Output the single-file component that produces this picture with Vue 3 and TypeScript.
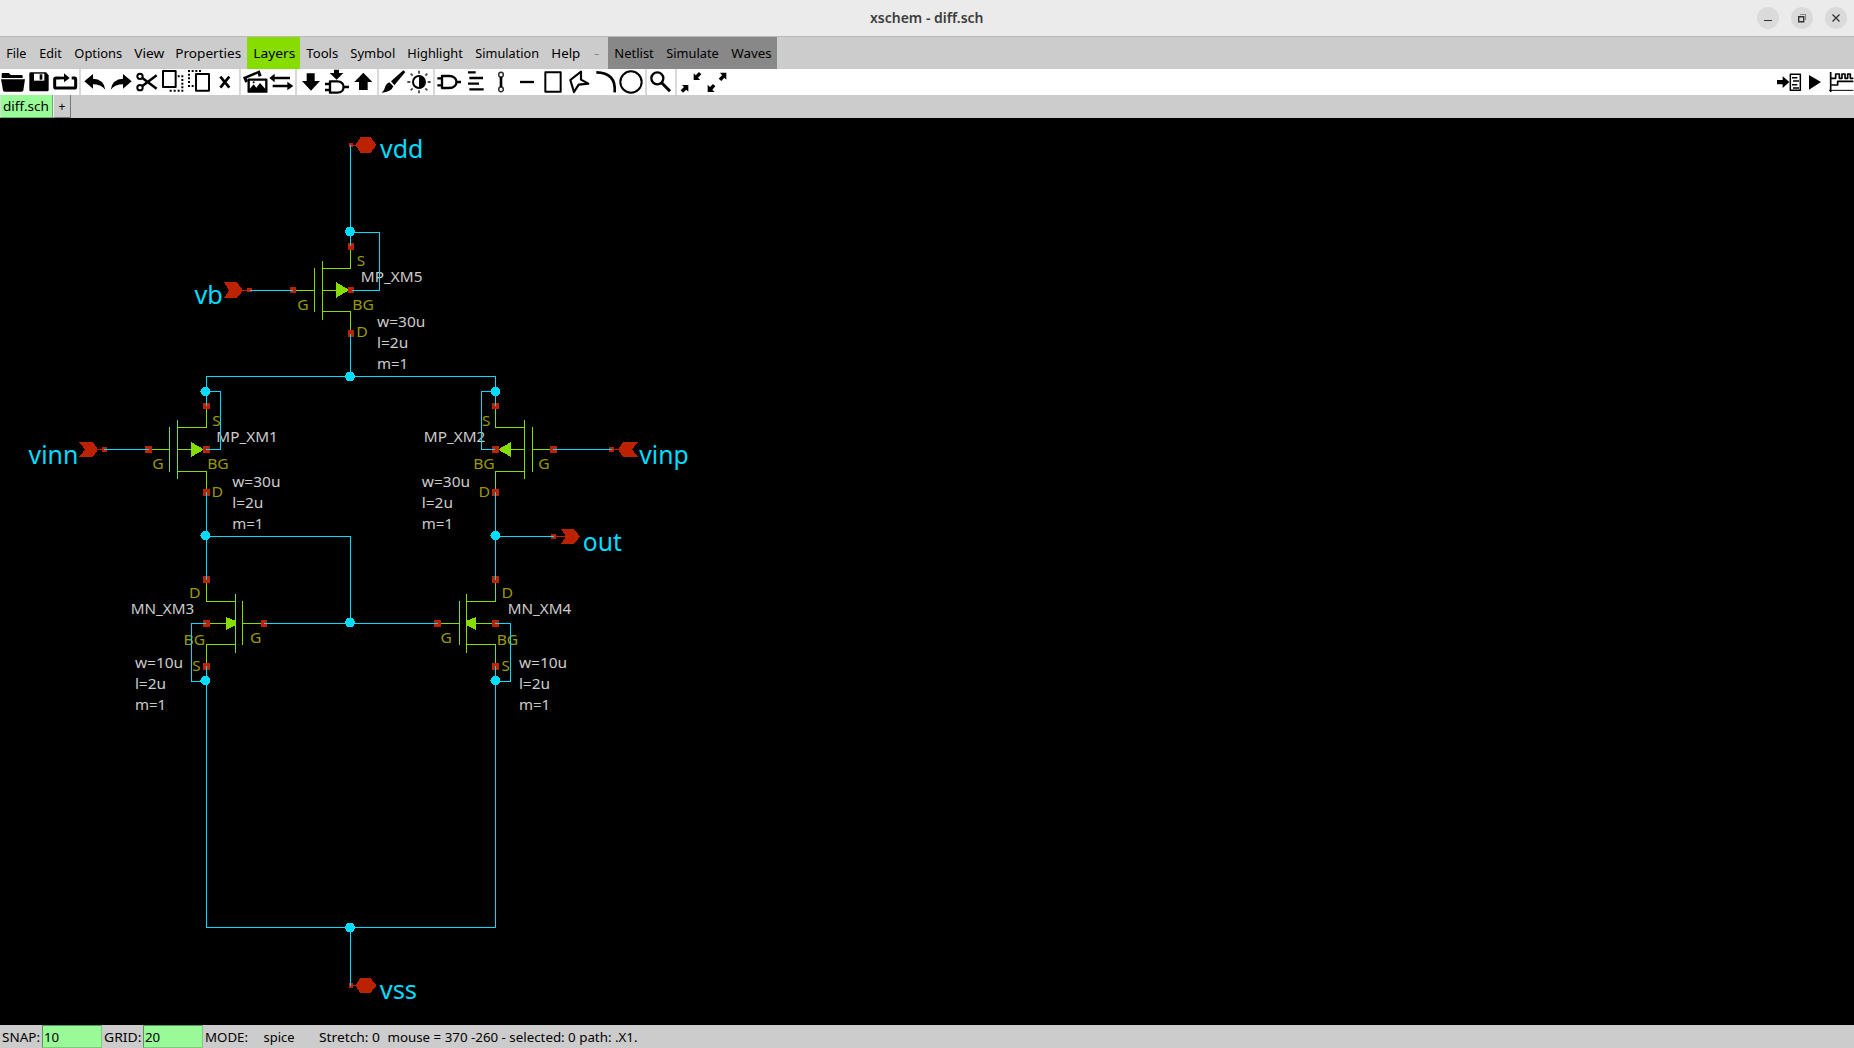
<script setup lang="ts">
interface MenuItem { label: string; start: number; end: number; text: number; kind?: string }
interface Label { t: string; x: number; y: number; w: number; c: string }

const menu: MenuItem[] = [
  { label: 'File', start: 0, end: 33, text: 20 },
  { label: 'Edit', start: 33, end: 68, text: 22.5 },
  { label: 'Options', start: 68, end: 128, text: 48 },
  { label: 'View', start: 128, end: 169, text: 30 },
  { label: 'Properties', start: 169, end: 247, text: 66 },
  { label: 'Layers', start: 247, end: 300, text: 42, kind: 'green' },
  { label: 'Tools', start: 300, end: 344, text: 32 },
  { label: 'Symbol', start: 344, end: 401, text: 45 },
  { label: 'Highlight', start: 401, end: 469, text: 55.5 },
  { label: 'Simulation', start: 469, end: 545, text: 63.7 },
  { label: 'Help', start: 545, end: 588, text: 29 },
  { label: '-', start: 588, end: 608, text: 5, kind: 'dim' },
  { label: 'Netlist', start: 608, end: 660, text: 39.5, kind: 'dark' },
  { label: 'Simulate', start: 660, end: 725, text: 52.5, kind: 'dark' },
  { label: 'Waves', start: 725, end: 777, text: 40.5, kind: 'dark' },
]

const wires: string[] = [
  'M350.5 145V246', 'M350 232.5H379.5V290.5H352', 'M250 290.5H293',
  'M350.5 334V376.5', 'M206.5 406V376.5H495.5V406',
  'M206 391.5H220.5V449.5H206', 'M495 391.5H481.5V449.5H495',
  'M104 449.5H149', 'M553 449.5H612',
  'M206.5 492V580', 'M495.5 492V580',
  'M206 536.5H350.5V623', 'M495 536.5H554',
  'M264 623.5H438',
  'M206 623.5H191.5V681.5H206', 'M495 623.5H510.5V681.5H495',
  'M206.5 666V927.5H495.5V666', 'M350.5 927V986',
]
const devices: string[] = [
  'M350.5 249V268.5H322M322.5 261V320M314.5 268V312M322 311.5H350.5V331M296 290.5H314M323 290.5H337',
  'M206.5 409V427.5H177M177.5 420V479M169.5 427V472M177 471.5H206.5V490M152 449.5H169M178 449.5H192',
  'M495.5 409V427.5H525M524.5 420V479M532.5 427V472M525 471.5H495.5V490M550 449.5H533M524 449.5H510',
  'M206.5 583V601.5H236M235.5 594V653M242.5 601V645M236 644.5H206.5V664M261 623.5H243M209 623.5H227',
  'M495.5 583V601.5H466M466.5 594V653M459.5 601V645M466 644.5H495.5V664M441 623.5H459M476 623.5H493',
]
const arrows: string[] = [
  '336,282 336,298 349,290', '191,442 191,457 204,449.5', '511,442 511,457 498,449.5',
  '226,617 226,630 236,625 236,621', '476,617 476,630 466,625 466,621',
]
const pins: number[][] = [
  [348, 243, 6, 7], [348, 287, 6, 6], [348, 330, 6, 7], [290, 287, 6, 6],
  [203, 403, 7, 6], [203, 446, 7, 7], [203, 489, 7, 7], [145, 446, 7, 7],
  [492, 403, 7, 6], [492, 446, 7, 7], [492, 489, 7, 7], [550, 446, 7, 7],
  [203, 576, 7, 7], [203, 620, 7, 7], [203, 663, 7, 7], [261, 620, 6, 7],
  [492, 576, 7, 7], [492, 620, 7, 7], [492, 663, 7, 7], [434, 620, 7, 7],
  [349, 143, 4, 4], [349, 983, 4, 5], [247, 288, 5, 4], [102, 447, 5, 5],
  [609, 447, 5, 5], [551, 534, 5, 5],
]
const ports: string[] = [
  '355.5,145 360.5,137 370.500,137 376.5,145 370.500,153 360.5,153',
  '355.5,985.5 360.5,978 370.500,978 376.5,985.5 370.500,993 360.5,993',
  '224,282 237,282 243,290.5 237,298 224,298 229,290.5',
  '79,442 93,442 98,449.5 93,457 79,457 85,449.5',
  '638,442 623,442 618,449.5 623,457 638,457 632,449.5',
  '561,529 574,529 580,536.5 574,544 561,544 566,536.5',
]
const stubs = 'M353 145.5H356M353 985.5H356M242 290.5H247M97 449.5H102M614 449.5H619M556 536.5H566'
const dots: number[][] = [
  [350, 231.5], [350, 376.5], [205.3, 391.5], [495.3, 391.5], [205.3, 535.5], [495.3, 535.5],
  [350, 622.5], [205.3, 680.5], [495.3, 680.5], [350, 927.5],
]

const params = (x: number, y: number, w: string): Label[] => [
  { t: `w=${w}`, x, y, w: 48.3, c: 'val' },
  { t: 'l=2u', x, y: y + 21, w: 31.2, c: 'val' },
  { t: 'm=1', x, y: y + 42, w: 31.2, c: 'val' },
]
const labels: Label[] = [
  { t: 'vdd', x: 380, y: 158, w: 43.4, c: 'net' },
  { t: 'vb', x: 194.5, y: 304, w: 28.4, c: 'net' },
  { t: 'vinn', x: 28.5, y: 464, w: 49.8, c: 'net' },
  { t: 'vinp', x: 639.3, y: 464, w: 49.4, c: 'net' },
  { t: 'out', x: 582.8, y: 551, w: 39.2, c: 'net' },
  { t: 'vss', x: 379.7, y: 999, w: 37.4, c: 'net' },
  { t: 'MP_XM5', x: 360.8, y: 282, w: 61.7, c: 'val' },
  { t: 'MP_XM1', x: 216.3, y: 442, w: 61.5, c: 'val' },
  { t: 'MP_XM2', x: 423.8, y: 442, w: 61.5, c: 'val' },
  { t: 'MN_XM3', x: 130.7, y: 614, w: 63.5, c: 'val' },
  { t: 'MN_XM4', x: 507.7, y: 614, w: 63.5, c: 'val' },
  ...params(377, 327, '30u'), ...params(232.2, 487, '30u'), ...params(421.8, 487, '30u'),
  ...params(134.9, 668, '10u'), ...params(518.9, 668, '10u'),
  { t: 'S', x: 356.7, y: 266, w: 8.4, c: 'pin' },
  { t: 'G', x: 297.3, y: 310, w: 11.4, c: 'pin' },
  { t: 'BG', x: 352.3, y: 310, w: 21.6, c: 'pin' },
  { t: 'D', x: 356.3, y: 337, w: 11.6, c: 'pin' },
  { t: 'S', x: 212.2, y: 426, w: 8.4, c: 'pin' },
  { t: 'G', x: 152.2, y: 469, w: 11.4, c: 'pin' },
  { t: 'BG', x: 207.2, y: 469, w: 21.6, c: 'pin' },
  { t: 'D', x: 211.6, y: 497, w: 11.6, c: 'pin' },
  { t: 'S', x: 482, y: 426, w: 8.4, c: 'pin' },
  { t: 'G', x: 538.2, y: 469, w: 11.4, c: 'pin' },
  { t: 'BG', x: 473.2, y: 469, w: 21.6, c: 'pin' },
  { t: 'D', x: 478.6, y: 497, w: 11.6, c: 'pin' },
  { t: 'D', x: 189, y: 598, w: 11.6, c: 'pin' },
  { t: 'BG', x: 183.5, y: 645, w: 21.6, c: 'pin' },
  { t: 'S', x: 192.2, y: 671, w: 8.4, c: 'pin' },
  { t: 'G', x: 250, y: 643, w: 11.4, c: 'pin' },
  { t: 'D', x: 501.4, y: 598, w: 11.6, c: 'pin' },
  { t: 'BG', x: 496.7, y: 645, w: 21.6, c: 'pin' },
  { t: 'S', x: 501.6, y: 671, w: 8.4, c: 'pin' },
  { t: 'G', x: 440.6, y: 643, w: 11.4, c: 'pin' },
]
</script>

<template>
  <div class="app">
    <header class="title">
      <svg class="caption" width="120" height="36"><text x="3" y="23" textLength="113.5" lengthAdjust="spacingAndGlyphs">xschem - diff.sch</text></svg>
      <div class="controls">
        <span class="ctl"><svg width="22" height="22"><path d="M7 13.5h8" /></svg></span>
        <span class="ctl"><svg width="22" height="22"><path d="M7.7 9.7h5v5h-5z" stroke-width="1.4" /><path d="M9 7.5h5.5v5.500" opacity=".5" stroke-width="1.1" /></svg></span>
        <span class="ctl"><svg width="22" height="22"><path d="M7.500 7.500l7 7M14.500 7.500l-7 7" stroke-width="1.3" /></svg></span>
      </div>
    </header>

    <nav class="menu">
      <svg v-for="m in menu" :key="m.label" :class="['item', m.kind]" :width="m.end - m.start" height="32">
        <text x="6.3" y="21" :textLength="m.text" lengthAdjust="spacingAndGlyphs">{{ m.label }}</text>
      </svg>
    </nav>

    <div class="tools">
      <svg class="group" width="79" height="26" viewBox="0 117 237 78">
        <path d="M5 144V132q0-3 3-3h18l7 6h31q4 0 4 4v5z" />
        <path d="M3 148H75L70 181q-1 4-5 4H14q-4 0-5-4z" />
        <path d="M92 127H138L146 136V180q0 4-4 4H92q-4 0-4-4V131q0-4 4-4z" />
        <path d="M102 131H133V152H102z" fill="#fff" /><path d="M119 133h8v16h-8z" />
        <path class="s" stroke-width="9" d="M180 144H168q-4 0-4 4V170q0 4 4 4H223q4 0 4-4V148q0-4-4-4H215" />
        <path class="s" stroke-width="8" d="M180 144H197" /><path d="M192 130L209 144L192 157z" />
      </svg>
      <svg class="group" width="158" height="26" viewBox="243 117 474 78">
        <path d="M253 154L279 132V146Q311 147 316 179Q302 163 279 163V176z" />
        <path d="M395 154L369 132V146Q337 147 332 179Q346 163 369 163V176z" />
        <g class="s" stroke-width="6"><circle cx="420" cy="139" r="8" /><circle cx="420" cy="173" r="8" /><path stroke-width="7.500" d="M427 144L470 176M427 168L470 136" /></g>
        <path class="s" stroke-width="6" d="M489 123H527V171H489z" />
        <path d="M533 136h6v6h-6zM544 136h6v6h-6zM544 147h6v6h-6zM544 158h6v6h-6zM544 169h6v6h-6zM544 179h6v6h-6zM533 179h6v6h-6zM521 179h6v6h-6zM509 179h6v6h-6z" />
        <path class="s" stroke-width="6" d="M588 132H627V182H588z" />
        <path d="M564 120h6v6h-6zM575 120h6v6h-6zM586 120h6v6h-6zM597 120h6v6h-6zM564 131h6v6h-6zM564 142h6v6h-6zM564 153h6v6h-6zM564 165h6v6h-6zM575 165h6v6h-6z" />
        <path class="s" stroke-width="8" d="M661 140L688 173M688 140L661 173" />
      </svg>
      <svg class="group" width="54" height="26" viewBox="723 117 162 78">
        <path d="M729 142L779 121L785 137L776 140L773 131L741 145L744 154L736 158z" />
        <path class="s" stroke-width="7" d="M746 149H799V185H746z" />
        <path d="M748 178L761 163L769 173L780 159L797 178V186H748z" /><circle cx="761" cy="157" r="3" />
        <path class="s" stroke-width="7" d="M822 144H870M818 168H865" /><path d="M808 144L824 131V157zM880 168L862 155V181z" />
      </svg>
      <svg class="group" width="80" height="26" viewBox="891 117 240 78">
        <path d="M920 130H944V153H960L933 182L906 153H920z" />
        <path d="M1077 180H1103V156H1117L1090 128L1063 156H1077z" />
        <path d="M1002 119H1017V129H1030L1010 149L989 129H1002z" />
        <path class="s" stroke-width="7" d="M990 154H1012C1037 154 1037 188 1012 188H990zM975 162H990M975 180H990M1031 171H1047" />
      </svg>
      <svg class="group" width="54" height="26" viewBox="1137 117 162 78">
        <path d="M1173 154L1210 121L1216 126L1183 166zM1168 157L1180 169Q1174 187 1145 188Q1154 181 1156 169Q1159 160 1168 157z" />
        <g transform="translate(1200,0)">
          <circle class="s" cx="57" cy="156" r="18" stroke-width="6" /><path d="M57 138A18 18 0 0 1 57 174z" />
          <path class="s" stroke-width="5.500" d="M57 122V131M57 181V190M22 156H31M83 156H92M32 131L38 137M76 175L82 181M32 181L38 175M76 137L82 131" opacity=".7" />
        </g>
      </svg>
      <svg class="group" width="210" height="26" viewBox="1305 117 630 78">
        <g transform="translate(1200,0)" class="s" stroke-width="7">
          <path d="M126 138H147C177 138 177 174 147 174H126zM112 145H126M112 166H126M170 156H183" />
          <path d="M204 127H227M208 144H249M204 161H237M208 178H251" />
          <g stroke-width="4.500" opacity=".8"><circle cx="303" cy="134" r="7" /><circle cx="303" cy="178" r="7" /></g><path d="M303 141V171" stroke-width="8" />
          <path d="M360 156H402" /><path stroke-width="6" d="M436 127H482V185H436z" />
          <path stroke-width="6.500" d="M511 150L543 125V149L565 161L536 164L522 186z" />
          <path stroke-width="8" d="M589 127Q649 128 644 187" /><circle cx="693" cy="156" r="32" stroke-width="6" />
        </g>
      </svg>
      <svg class="group" width="28" height="26" viewBox="1941 117 84 78"><g class="s" transform="translate(1200,0)" stroke-width="7"><circle cx="772" cy="145" r="18" /><path stroke-width="9" d="M785 158L810 184" /></g></svg>
      <svg class="group" width="60" height="26" viewBox="2031 117 180 78">
        <g transform="translate(1200,0)">
          <path d="M846 165H865V185L859 179L849 188L842 181L852 171zM881 150V130L887 136L897 126L904 133L894 143L900 150z" />
          <path d="M923 164V186H944L937 179L946 169L939 162L930 171zM960 128H979V149L973 143L964 153L956 146L966 136z" />
        </g>
      </svg>
      <div class="fill"></div>
      <svg class="group" width="79" height="26" viewBox="5325 117 237 78">
        <g transform="translate(5100,-90)">
          <path d="M231 240H248V229L268 246L248 264V253H231z" /><path class="s" stroke-width="4.500" d="M271 223H301V271H271zM276 233H292M279 243H297M276 254H292M279 264H297" />
          <path d="M327 225L363 246L327 269z" />
          <path class="s" stroke-width="5" d="M392 216V276M392 235H407V222H418V235H426V222H435V235H443V222H451V235H460M392 255H413V244H460" />
          <path class="s" stroke-width="3" d="M387 271H460" />
        </g>
      </svg>
    </div>

    <div class="tabs">
      <svg class="tab" width="53" height="23"><text x="2" y="16" textLength="46" lengthAdjust="spacingAndGlyphs">diff.sch</text></svg>
      <span class="plus">+</span>
    </div>

    <svg class="canvas" width="1854" height="907" viewBox="0 118 1854 907">
      <g shape-rendering="crispEdges">
        <path v-for="d in devices" :key="d" class="dev" :d="d" />
        <polygon v-for="a in arrows" :key="a" class="arrow" :points="a" />
        <rect v-for="(p, i) in pins" :key="i" class="red" :x="p[0]" :y="p[1]" :width="p[2]" :height="p[3]" />
        <polygon v-for="p in ports" :key="p" class="red" :points="p" />
        <path class="stub" :d="stubs" />
      </g>
      <text v-for="(l, i) in labels" :key="i" :class="l.c" :x="l.x" :y="l.y" :textLength="l.w" lengthAdjust="spacingAndGlyphs">{{ l.t }}</text>
      <g shape-rendering="crispEdges">
        <path v-for="w in wires" :key="w" class="wire" :d="w" />
        <circle v-for="(c, i) in dots" :key="i" class="dot" :cx="c[0]" :cy="c[1]" r="4.900" />
      </g>
    </svg>

    <footer class="status">
      <svg width="42" height="23"><text x="2" y="17" textLength="38" lengthAdjust="spacingAndGlyphs">SNAP:</text></svg>
      <span class="field">10</span>
      <svg width="41" height="23"><text x="2" y="17" textLength="37.500" lengthAdjust="spacingAndGlyphs">GRID:</text></svg>
      <span class="field">20</span>
      <svg width="500" height="23">
        <text x="2" y="17" textLength="43" lengthAdjust="spacingAndGlyphs">MODE:</text>
        <text x="60.500" y="17" textLength="31" lengthAdjust="spacingAndGlyphs">spice</text>
        <text x="116" y="17" textLength="61" lengthAdjust="spacingAndGlyphs">Stretch: 0</text>
        <text x="184.500" y="17" textLength="250" lengthAdjust="spacingAndGlyphs">mouse = 370 -260 - selected: 0 path: .X1.</text>
      </svg>
    </footer>
  </div>
</template>

<style>
body { background: #000; }
</style>
<style scoped>
.app { width: 1854px; height: 1048px; display: flex; flex-direction: column; overflow: hidden; background: #cccccc; font: 13.3px "Noto Sans", sans-serif; color: #000; }
svg { display: block; flex: none; }
.title { height: 36px; flex: none; background: #ebebeb; border-bottom: 1px solid #b9b9b9; display: flex; align-items: center; padding-left: 867px; }
.caption { fill: #3d3d3d; font-size: 13.7px; font-weight: 600; }
.controls { margin-left: auto; display: flex; gap: 12px; padding-right: 7px; }
.ctl { width: 22px; height: 22px; border-radius: 50%; background: #dadada; }
.ctl path { fill: none; stroke: #333; }
.menu { height: 32px; display: flex; flex: none; }
.item { fill: #000; }
.green { background: #88dd00; }
.dark { background: #888888; }
.dim { fill: #888; }
.tools { height: 26px; flex: none; display: flex; gap: 2px; background: #d9d9d9; }
.group { background: #fff; }
.s { fill: none; stroke: #000; stroke-linejoin: round; }
.fill { flex: 1; background: #fff; margin: 0 -2px; }
.tabs { height: 23px; flex: none; display: flex; }
.tab { box-sizing: border-box; background: #98fb98; border-left: 1px solid #d9d9d9; border-right: 1px solid #6aaf6a; border-bottom: 1px solid #6aaf6a; }
.plus { box-sizing: border-box; width: 18px; border-right: 1px solid #777; border-bottom: 1px solid #777; border-left: 1px solid #eee; text-align: center; line-height: 24px; font-size: 12px; }
.canvas { background: #000; }
.wire { fill: none; stroke: #00ddff; }
.dot { fill: #00ddff; }
.dev { fill: none; stroke: #88dd00; }
.arrow { fill: #88dd00; }
.red { fill: #bb2200; }
.stub { stroke: #bb2200; }
.net { fill: #00ddff; font-size: 24.500px; }
.val { fill: #cccccc; font-size: 14.700px; }
.pin { fill: #999900; font-size: 14.700px; }
.status { height: 23px; flex: none; display: flex; }
.field { box-sizing: border-box; width: 60px; height: 23px; background: #98fb98; border: 1px solid #7fca7f; border-top-color: #5a965a; border-left-color: #5a965a; padding-left: 1px; line-height: 22px; }
</style>
